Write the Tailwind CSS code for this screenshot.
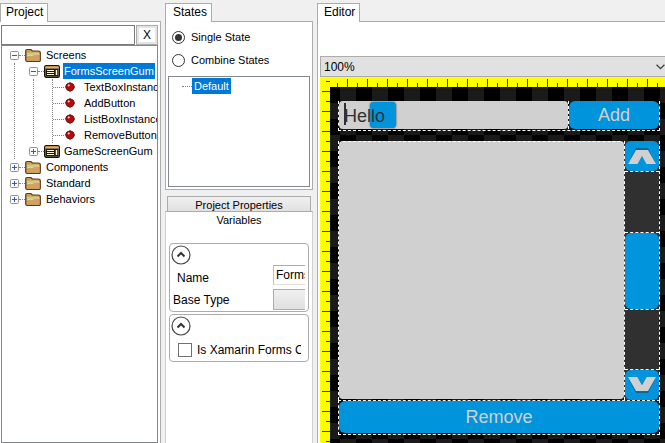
<!DOCTYPE html>
<html lang="en">
<head>
<meta charset="utf-8">
<meta name="viewport" content="width=device-width, initial-scale=1">
<title>Gum</title>
<script src="https://cdn.jsdelivr.net/npm/@tailwindcss/browser@4"></script>
</head>
<body class="flex h-screen gap-1 overflow-hidden bg-[#f0f0f0] pt-[3px] font-['Liberation_Sans',Arial,sans-serif] text-[11px] leading-4 text-black">
<svg class="hidden">
  <symbol id="folder" viewBox="0 0 16 16">
    <path d="M.7 13V4Q.7 2.500 2 2.500H6L7.500 4H13.500Q15.300 4 15.300 5.500V13.500Q15.300 14.500 14 14.500H2Q.7 14.500 .7 13Z" fill="#c79a5b" stroke="#5a3c1e" stroke-width="1.200"/>
    <path d="M2 5.500H14V8H2Z" fill="#c9cf6a"/>
    <path d="M2 13.500V8.500H8L9.500 7H14.500V13.500Z" fill="#d3a06c"/>
    <path d="M2 8.500H8L9.500 7H14.500" stroke="#edcf9b" fill="none"/>
  </symbol>
  <symbol id="screen" viewBox="0 0 16 16">
    <rect x=".7" y="2.700" width="14.600" height="11.600" rx="1.500" fill="#fff6dc" stroke="#17120b" stroke-width="1.400"/>
    <path d="M1.500 3.500h13v2h-13z" fill="#ffa824"/>
    <path d="M1.500 5.500h13v8h-13z" fill="#201a10"/>
    <path d="M3 7.500h7M3 9.500h7M3 11.500h7" stroke="#fff6dc"/>
    <path d="M12.500 7v5" stroke="#fff6dc" stroke-width="1.500"/>
  </symbol>
  <symbol id="gem" viewBox="0 0 10 10">
    <path d="M5 .7L8.300 2.200L9.400 5L8 7.800L5 9.300L2 7.800L.6 5L1.700 2.200Z" fill="#b80c0c" stroke="#5e0606" stroke-linejoin="round"/>
    <path d="M3 4L4.500 2.700" stroke="#ffb0b0" stroke-width="1.800"/>
  </symbol>
  <symbol id="minus" viewBox="0 0 9 9">
    <rect x=".5" y=".5" width="8" height="8" rx="1" fill="#fafafa" stroke="#919191"/><path d="M2 4.500h5" stroke="#3c5a9c"/>
  </symbol>
  <symbol id="plus" viewBox="0 0 9 9">
    <rect x=".5" y=".5" width="8" height="8" rx="1" fill="#fafafa" stroke="#919191"/><path d="M2 4.500h5M4.500 2v5" stroke="#3c5a9c"/>
  </symbol>
  <symbol id="collapse" viewBox="0 0 20 20">
    <circle cx="10" cy="10" r="9" fill="#fff" stroke="#444" stroke-width="1.200"/><path d="M6.500 11.500L10 8L13.500 11.500" fill="none" stroke="#333" stroke-width="2"/>
  </symbol>
</svg>

<section class="flex w-[161px] shrink-0 flex-col">
  <h2 class="z-10 -mb-px h-[19px] w-12 border border-b-0 border-[#acacac] bg-white pl-[5px] text-xs leading-4">Project</h2>
  <div class="flex min-h-0 flex-1 flex-col border-t border-r border-[#acacac] bg-white pt-[3px] pr-[2px] pl-px">
    <div class="flex h-5 gap-px">
      <input aria-label="Search" class="min-w-0 flex-1 border border-[#7a7a7a] bg-white px-1">
      <button class="flex w-[22px] items-center border border-[#acacac] bg-[#e4e4e4] p-[2px]"><span class="w-full bg-white text-xs leading-[14px]">X</span></button>
    </div>
    <ul class="relative flex-1 overflow-hidden border border-[#828790] pt-px pl-2 whitespace-nowrap">
      <li class="flex h-4 items-center"><svg class="size-[9px] shrink-0"><use href="#minus"/></svg><i class="w-[6px] shrink-0 border-t border-dotted border-[#808080]"></i><svg class="size-4 shrink-0"><use href="#folder"/></svg><span class="pl-[5px]">Screens</span></li>
      <li class="ml-1 border-l border-dotted border-[#808080] pl-[14px]">
        <ul>
          <li class="flex h-4 items-center"><svg class="size-[9px] shrink-0"><use href="#minus"/></svg><i class="w-[6px] shrink-0 border-t border-dotted border-[#808080]"></i><svg class="size-4 shrink-0"><use href="#screen"/></svg><span class="ml-[3px] bg-[#0078d7] px-px text-white">FormsScreenGum</span></li>
          <li class="ml-1 border-l border-dotted border-[#808080] pl-[18px]">
            <ul class="border-l border-dotted border-[#808080]">
              <li class="flex h-4 items-center"><i class="w-[11px] shrink-0 border-t border-dotted border-[#808080]"></i><svg class="ml-px size-[10px] shrink-0"><use href="#gem"/></svg><span class="pl-[9px]">TextBoxInstance</span></li>
              <li class="flex h-4 items-center"><i class="w-[11px] shrink-0 border-t border-dotted border-[#808080]"></i><svg class="ml-px size-[10px] shrink-0"><use href="#gem"/></svg><span class="pl-[9px]">AddButton</span></li>
              <li class="flex h-4 items-center"><i class="w-[11px] shrink-0 border-t border-dotted border-[#808080]"></i><svg class="ml-px size-[10px] shrink-0"><use href="#gem"/></svg><span class="pl-[9px]">ListBoxInstance</span></li>
              <li class="flex h-4 items-center"><i class="w-[11px] shrink-0 border-t border-dotted border-[#808080]"></i><svg class="ml-px size-[10px] shrink-0"><use href="#gem"/></svg><span class="pl-[9px]">RemoveButton</span></li>
            </ul>
          </li>
          <li class="flex h-4 items-center"><svg class="size-[9px] shrink-0"><use href="#plus"/></svg><i class="w-[6px] shrink-0 border-t border-dotted border-[#808080]"></i><svg class="size-4 shrink-0"><use href="#screen"/></svg><span class="pl-1">GameScreenGum</span></li>
        </ul>
      </li>
      <li class="flex h-4 items-center"><svg class="size-[9px] shrink-0"><use href="#plus"/></svg><i class="w-[6px] shrink-0 border-t border-dotted border-[#808080]"></i><svg class="size-4 shrink-0"><use href="#folder"/></svg><span class="pl-[5px]">Components</span></li>
      <li class="flex h-4 items-center"><svg class="size-[9px] shrink-0"><use href="#plus"/></svg><i class="w-[6px] shrink-0 border-t border-dotted border-[#808080]"></i><svg class="size-4 shrink-0"><use href="#folder"/></svg><span class="pl-[5px]">Standard</span></li>
      <li class="flex h-4 items-center"><svg class="size-[9px] shrink-0"><use href="#plus"/></svg><i class="w-[6px] shrink-0 border-t border-dotted border-[#808080]"></i><svg class="size-4 shrink-0"><use href="#folder"/></svg><span class="pl-[5px]">Behaviors</span></li>
    </ul>
  </div>
</section>

<section class="flex w-[148px] shrink-0 flex-col">
  <h2 class="z-10 -mb-px h-[19px] w-[47px] border border-b-0 border-[#acacac] bg-white pl-[7px] text-xs leading-4">States</h2>
  <div class="flex h-[169px] flex-col border border-[#acacac] bg-white px-[2px] pb-[2px]">
    <label class="mt-[7px] flex h-4 items-center gap-[6px] pl-1"><input type="radio" name="mode" checked class="size-[13px] appearance-none rounded-full border border-[#333] bg-white p-[2px] checked:bg-[#333] checked:bg-clip-content">Single State</label>
    <label class="mt-[7px] flex h-4 items-center gap-[6px] pl-1"><input type="radio" name="mode" class="size-[13px] appearance-none rounded-full border border-[#333] bg-white">Combine States</label>
    <ul class="mt-2 flex-1 border border-[#828790] pt-px pl-[13px]">
      <li class="flex h-4 items-center"><i class="w-[10px] border-t border-dotted border-[#808080]"></i><span class="bg-[#0078d7] px-[2px] text-white">Default</span></li>
    </ul>
  </div>
  <button class="mx-[2px] mt-[6px] h-4 border border-b-0 border-[#acacac] bg-linear-to-b from-[#f0f0f0] to-[#e0e0e0] leading-4">Project Properties</button>
  <div class="-mt-px flex-1 border border-b-0 border-[#d0d0d0] border-t-[#acacac] bg-white px-[3px]">
    <h3 class="text-center">Variables</h3>
    <fieldset class="mt-[15px] h-[69px] min-w-0 rounded border border-[#acacac] text-xs">
      <button aria-label="Collapse" class="mt-px ml-px block"><svg class="size-5"><use href="#collapse"/></svg></button>
      <div class="flex h-5 items-center pr-[3px] pl-[7px]"><label for="nm" class="flex-1 pt-[5px]">Name</label><input id="nm" value="FormsScreenGum" class="h-5 w-8 border border-r-0 border-b-[#e0e0e0] border-l-[#c0c0c0] border-t-[#acacac] pl-[2px]"></div>
      <div class="mt-1 flex h-[21px] items-center pr-[3px] pl-[3px]"><label for="bt" class="flex-1">Base Type</label><select id="bt" class="h-[21px] w-8 appearance-none border border-r-0 border-[#acacac] bg-linear-to-b from-[#f0f0f0] to-[#e0e0e0]"><option></option></select></div>
    </fieldset>
    <fieldset class="mt-[2px] h-12 min-w-0 rounded border border-[#acacac] text-xs">
      <button aria-label="Collapse" class="mt-px ml-px block"><svg class="size-5"><use href="#collapse"/></svg></button>
      <label class="mt-1 mr-[7px] ml-2 flex h-5 items-center gap-[5px] overflow-hidden whitespace-nowrap"><input type="checkbox" class="size-[14px] shrink-0 appearance-none border border-[#707070] bg-white">Is Xamarin Forms Control</label>
    </fieldset>
  </div>
</section>

<section class="flex min-w-0 flex-1 flex-col">
  <h2 class="z-10 -mb-px h-[19px] w-[43px] border border-b-0 border-[#acacac] bg-white pl-[6px] text-xs leading-4">Editor</h2>
  <div class="flex min-h-0 flex-1 flex-col border-t border-l border-[#acacac] bg-white pt-[34px] pl-[2px]">
    <div class="relative h-[21px] shrink-0">
      <select aria-label="Zoom" class="block h-full w-full appearance-none border border-r-0 border-[#acacac] bg-[#e1e1e1] pl-[3px] text-xs"><option>100%</option></select>
      <svg class="pointer-events-none absolute top-[7px] right-0 size-[9px]" viewBox="0 0 8 8"><path d="M.5 1.500L4 5L7.500 1.500" fill="none" stroke="#444" stroke-width="1.200"/></svg>
    </div>
    <div class="grid min-h-0 flex-1 grid-cols-[10px_1fr] grid-rows-[10px_1fr] bg-[#ffff00]">
      <svg class="col-span-2 h-[10px] w-full"><defs><pattern id="rt" x="7" width="20" height="10" patternUnits="userSpaceOnUse"><path d="M.5 2v8M10.500 6v4" stroke="#006400"/></pattern></defs><rect x="10" width="100%" height="10" fill="url(#rt)"/><path d="M6 4.500h4" stroke="#006400"/></svg>
      <svg class="h-full w-[10px]"><defs><pattern id="rl" y="4" width="10" height="20" patternUnits="userSpaceOnUse"><path d="M2 .5h8M6 10.500h4" stroke="#006400"/></pattern></defs><rect width="10" height="100%" fill="url(#rl)"/></svg>
      <main class="flex min-w-0 flex-col bg-[repeating-conic-gradient(#1a1a1a_0_25%,#000_0_50%)] bg-size-[32px_32px] bg-position-[-6px_0px] pt-[14px] pr-[5px] pb-2 pl-2 text-lg leading-7">
        <div class="flex h-[30px] shrink-0 border-x border-b border-dashed border-white">
          <div class="relative mb-px flex-1 rounded bg-[#d0d0d0]">
            <span class="absolute top-px left-[31px] h-[26px] w-[26px] rounded bg-[#0094dd] shadow-[0_0_2px_#333]"></span>
            <span class="absolute top-[2px] left-[5px] h-[22px] w-[2px] bg-[#303030]"></span>
            <input aria-label="Text" value="Hello" class="relative block h-7 w-full bg-transparent pt-px pl-[5px] text-[#303030]">
          </div>
          <div class="mb-px w-[91px] border-l border-dashed border-white"><button class="block h-7 w-full rounded-md bg-[#0094dd] text-[#d0d0d0]">Add</button></div>
        </div>
        <div class="mt-[10px] flex min-h-0 flex-1 border-x border-dashed border-white">
          <div class="mb-px flex-1 rounded border-t border-dashed border-white bg-[#d0d0d0]"></div>
          <div class="flex w-[35px] flex-col border-l border-dashed border-white bg-[#303030]">
            <button aria-label="Scroll up" class="flex h-[30px] shrink-0 items-center justify-center rounded-md bg-[#0094dd]"><svg class="h-4 w-7" viewBox="0 0 28 16"><path d="M1 14L8 0H20L27 14H18L14 8L10 14Z" fill="#086a9f"/><path d="M0 16L8 2H20L28 16H18.500L14 8L9.500 16Z" fill="#d0d0d0"/></svg></button>
            <div class="flex min-h-0 flex-1 flex-col border-y border-dashed border-white">
              <div class="flex-1"></div>
              <div class="h-[78px] border-y border-dashed border-white"><button aria-label="Scroll position" class="block h-full w-full rounded-md bg-[#0094dd]"></button></div>
              <div class="flex-1"></div>
            </div>
            <button aria-label="Scroll down" class="flex h-[30px] shrink-0 items-center justify-center rounded-md bg-[#0094dd]"><svg class="h-4 w-7" viewBox="0 0 28 16"><path d="M1 3L8 16H20L27 3Z" fill="#086a9f"/><path d="M0 0H9.500L14 8L18.500 0H28L20 14H8Z" fill="#d0d0d0"/><path d="M9.500 0H18.500L14 8Z" fill="#0094dd"/></svg></button>
          </div>
        </div>
        <div class="h-[35px] shrink-0 border border-dashed border-white"><button class="block h-8 w-full rounded-md bg-[#0094dd] text-[#d0d0d0]">Remove</button></div>
      </main>
    </div>
  </div>
</section>
</body>
</html>
